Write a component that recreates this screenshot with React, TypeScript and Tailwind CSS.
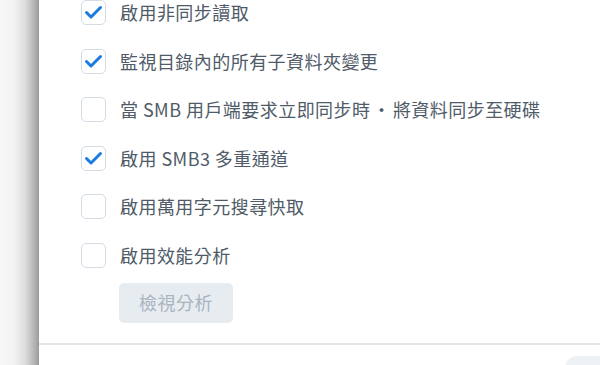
import React from "react";

const items: { label: React.ReactNode; checked: boolean }[] = [
  { label: "啟用非同步讀取", checked: true },
  { label: "監視目錄內的所有子資料夾變更", checked: true },
  {
    label: (
      <>
        當 SMB 用戶端要求立即同步時<span className="mx-[2px]">・</span>將資料同步至硬碟
      </>
    ),
    checked: false,
  },
  { label: <>啟用 SMB3 多重通道</>, checked: true },
  { label: "啟用萬用字元搜尋快取", checked: false },
  { label: "啟用效能分析", checked: false },
];

function Box({ checked }: { checked: boolean }) {
  return (
    <div className="w-[25px] h-[25px] shrink-0 rounded-[5px] border border-[#d3dbe4] bg-white flex items-center justify-center">
      {checked && (
        <svg width="19" height="15" viewBox="0 0 19 15" fill="none">
          <path d="M2.5 7.5 L7 12 L16.5 2.5" stroke="#1a7be0" strokeWidth="3" strokeLinecap="round" strokeLinejoin="round" />
        </svg>
      )}
    </div>
  );
}

export default function App() {
  return (
    <div
      className="w-[600px] h-[365px] overflow-hidden flex bg-white"
      style={{ fontFamily: '"Noto Sans CJK TC", "Noto Sans", sans-serif' }}
    >
      <div className="w-[39px] shrink-0 h-full bg-[linear-gradient(to_right,#f8f8f8_0%,#f3f3f3_35%,#dcdcdc_65%,#b4b4b4_88%,#9a9a9a_100%)]" />
      <div className="flex-1 flex flex-col bg-white">
        <div className="shrink-0 flex flex-col pl-[42px] gap-[23.6px] pt-0">
          {items.map((it, i) => (
            <div key={i} className="flex items-center gap-[14px] h-[25px]">
              <Box checked={it.checked} />
              <span className="text-[18px] leading-[25px] text-[#4f5b68] tracking-[0.45px] whitespace-nowrap">{it.label}</span>
            </div>
          ))}
        </div>
        <div className="shrink-0 pl-[80px] mt-[15px]">
          <div className="w-[114px] h-[40px] rounded-[5px] bg-[#e7ecf1] flex items-center justify-center text-[18px] text-[#a9b4bf] tracking-[0.5px]">
            檢視分析
          </div>
        </div>
        <div className="shrink-0 mt-[20px] h-[2px] bg-[#e3e7ec]" />
        <div className="shrink-0 flex justify-end pt-[11px]">
          <div className="w-[34px] h-[20px] rounded-tl-[10px] bg-[#eef1f4]" />
        </div>
      </div>
    </div>
  );
}
